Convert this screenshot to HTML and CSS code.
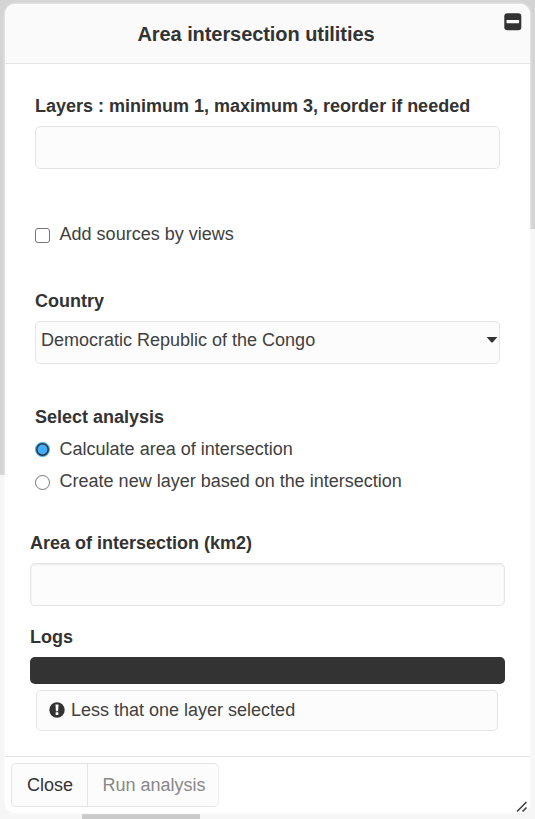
FILE: index.html
```html
<!DOCTYPE html>
<html lang="en">
<head>
<meta charset="utf-8">
<title>Area intersection utilities</title>
<link rel="stylesheet" href="styles.css">
</head>
<body>
<main class="modal">
  <header class="modal-head">
    <h1>Area intersection utilities</h1>
    <svg class="minimize" width="18" height="18" viewBox="0 0 18 18"><rect x=".3" y=".3" width="17" height="17" rx="3" fill="#333"/><rect x="2.5" y="7" width="12.6" height="3.2" rx=".6" fill="#fff"/></svg>
  </header>
  <section class="modal-body">
    <div class="inset">
      <div class="label">Layers : minimum 1, maximum 3, reorder if needed</div>
      <div class="field"></div>
      <label class="option sources"><span class="box"></span>Add sources by views</label>
      <div class="label country">Country</div>
      <div class="field select"><span>Democratic Republic of the Congo</span><svg width="12" height="7" viewBox="0 0 12 7"><path d="M.6 1H11.4L7 6Q6 7 5 6Z" fill="#333"/></svg></div>
      <div class="label analysis">Select analysis</div>
      <label class="option first"><svg class="dot" width="15" height="15" viewBox="0 0 15 15"><circle cx="7.5" cy="7.5" r="7.5" fill="#42aefa"/><circle cx="7.5" cy="7.5" r="5.7" fill="none" stroke="#333" stroke-width="1.5"/></svg>Calculate area of intersection</label>
      <label class="option"><span class="radio"></span>Create new layer based on the intersection</label>
    </div>
    <div class="label area">Area of intersection (km2)</div>
    <div class="field result"></div>
    <div class="label logs">Logs</div>
    <div class="log-bar"></div>
    <div class="log-item"><svg width="16" height="16" viewBox="0 0 16 16"><circle cx="8" cy="8" r="7.7" fill="#333"/><path d="M6.5 2.6H9.5L9.1 9.2H6.9Z" fill="#fff"/><rect x="6.6" y="10.3" width="2.8" height="2.7" rx=".4" fill="#fff"/></svg><span>Less that one layer selected</span></div>
  </section>
  <footer class="modal-foot">
    <div class="buttons"><div class="btn">Close</div><div class="btn disabled">Run analysis</div></div>
    <svg class="grip" width="12" height="12" viewBox="0 0 12 12"><path d="M1 10.5L10.5 1M6.5 10.5L10.5 6.5" stroke="#444" stroke-width="1.7" fill="none"/></svg>
  </footer>
</main>
</body>
</html>
```
FILE: styles.css
```css
* { box-sizing: border-box; }
body {
  margin: 0;
  height: 819px;
  padding: 4px 5px 6px;
  overflow: hidden;
  font: 18px/20px "Liberation Sans", Arial, sans-serif;
  color: #404040;
  background:
    linear-gradient(#d4d4d4, #d4d4d4) 0 0 / 535px 12px no-repeat,
    linear-gradient(#d4d4d4, #d4d4d4) 0 0 / 6px 475px no-repeat,
    linear-gradient(#d4d4d4, #d4d4d4) 100% 0 / 6px 229px no-repeat,
    linear-gradient(#cacaca, #cacaca) 82px 100% / 118px 5px no-repeat,
    #f6f6f6;
}
.modal {
  height: 809px;
  display: flex;
  flex-direction: column;
  border-radius: 10px;
  background: #fff;
  box-shadow: 0 0 3px rgba(255, 255, 255, .9);
}
.modal-head {
  position: relative;
  height: 60px;
  padding-top: 18px;
  border-bottom: 1px solid #e5e5e5;
  border-radius: 10px 10px 0 0;
  background: #fafafa;
  text-align: center;
}
h1 { margin: 0; padding-right: 23px; font-size: 20px; line-height: 24px; letter-spacing: -.07px; color: #333; }
.minimize { position: absolute; right: 8px; top: 9px; }
.modal-body { height: 692px; padding: 32px 25px 0; }
.inset { padding: 0 5px; }
.label { font-weight: bold; color: #333; }
.field {
  height: 43px;
  margin-top: 10px;
  border: 1px solid #e5e5e5;
  border-radius: 5px;
  background: #fcfcfc;
}
.option { display: flex; align-items: center; height: 20px; margin-top: 12px; gap: 9.6px; }
.sources { margin-top: 55px; }
.country { margin-top: 47px; }
.select { display: flex; justify-content: space-between; padding: 8px 1px 0 5px; }
.select svg { margin-top: 6px; }
.analysis { margin-top: 43px; }
.box, .radio, .dot { width: 15px; height: 15px; margin-top: 1px; }
.box, .radio { margin-top: 2px; border: 1px solid #767676; border-radius: 3px; background: #fff; }
.radio { border-radius: 50%; }
.area { margin-top: 42px; }
.result { box-shadow: inset 0 1px 2px rgba(0, 0, 0, .08); }
.logs { margin-top: 21px; }
.log-bar { height: 27px; margin-top: 10px; border-radius: 5px; background: #333; }
.log-item {
  display: flex;
  gap: 6px;
  height: 41px;
  margin: 6px 7px 0 6px;
  padding: 9px 12px;
  border: 1px solid #e5e5e5;
  border-radius: 5px;
  background: #fcfcfc;
}
.log-item svg { margin-top: 2px; }
.modal-foot { position: relative; flex: 1; padding: 6px; border-top: 1px solid #e5e5e5; }
.buttons { display: flex; }
.btn {
  width: 76px;
  height: 44px;
  padding: 11px 0 0 1px;
  border: 1px solid #e5e5e5;
  border-radius: 5px 0 0 5px;
  border-right: 0;
  background: #fcfcfc;
  color: #333;
  text-align: center;
}
.disabled { width: 132px; padding-left: 2px; border-right: 1px solid #eee; border-radius: 0 5px 5px 0; color: #888; }
.grip { position: absolute; right: 2px; bottom: 0; }
```
